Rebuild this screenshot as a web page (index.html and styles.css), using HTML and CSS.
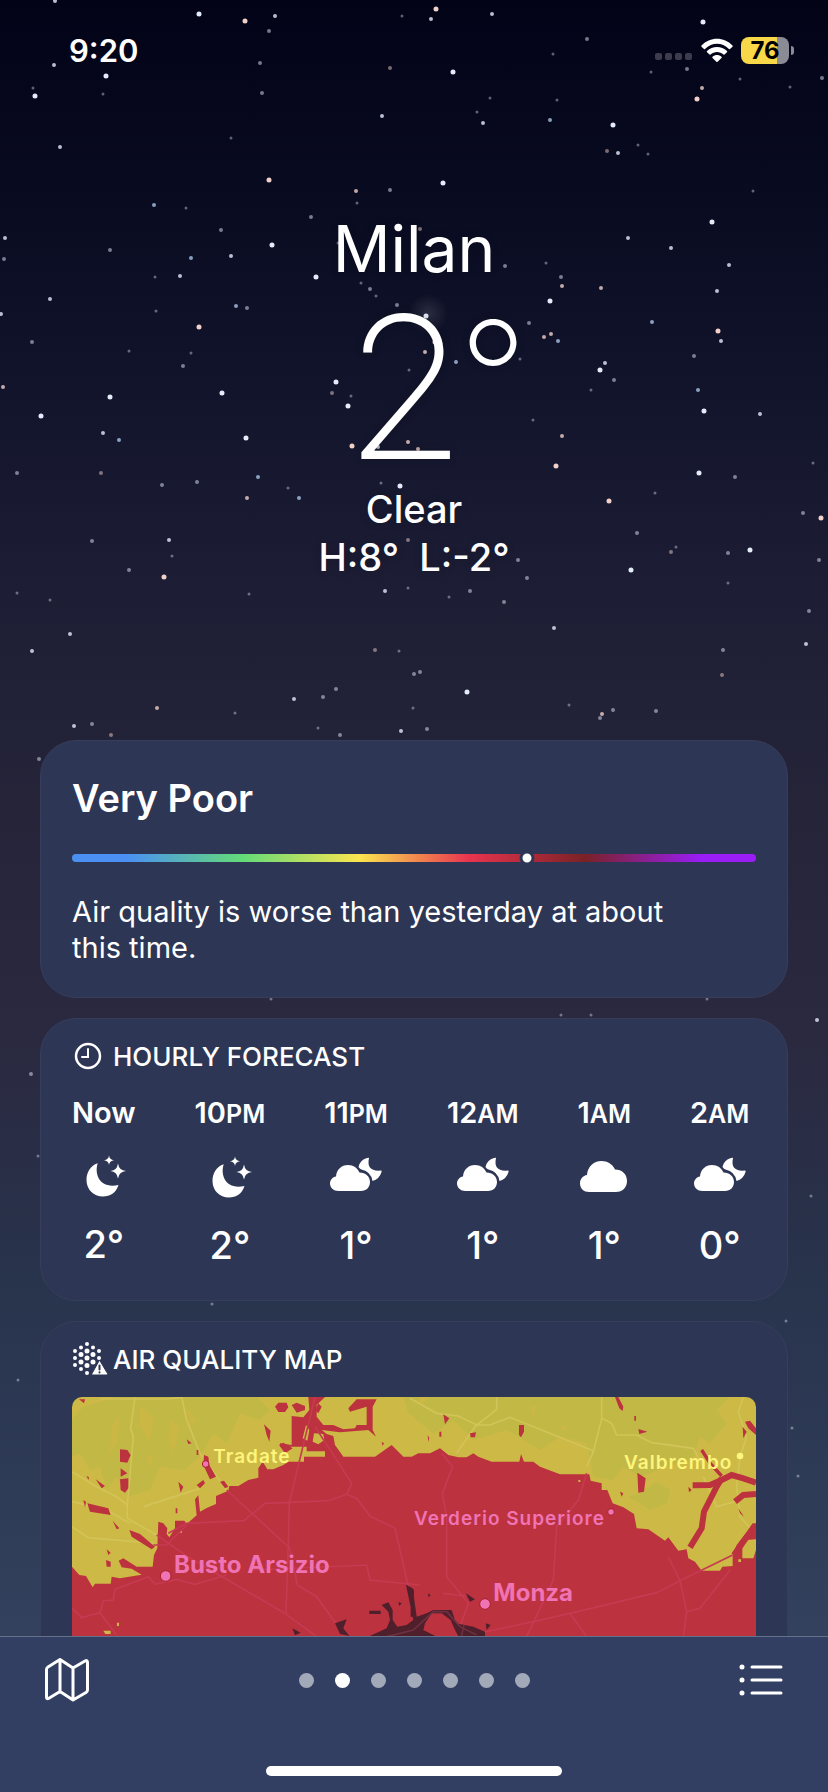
FILE: index.html
```html
<!DOCTYPE html>
<html lang="en">
<head>
  <meta charset="UTF-8">
  <meta name="viewport" content="width=device-width, initial-scale=1.0">
  <title>Weather - Milan</title>
  <link rel="stylesheet" href="styles.css">
</head>
<body>
  <!-- shared icons -->
  <svg class="defs" width="0" height="0" aria-hidden="true">
    <symbol id="moon-stars" viewBox="0 0 44 44">
      <path d="M15.500 10C12.500 20 17.500 35 36.500 31C34 39 28 42.500 21 42.500C11.500 42.500 4.500 35.500 4.500 26C4.500 18 8.500 12 15 9.500Q16.500 9.200 15.500 10Z"/>
      <path d="M27 1.500Q27.500 5.800 32 6.300Q27.500 6.800 27 11Q26.500 6.800 22 6.300Q26.500 5.800 27 1.500Z"/>
      <path d="M36 9.500Q37 16.500 44 17Q37 17.500 36 24.500Q35 17.500 28.500 17Q35 16.500 36 9.500Z"/>
    </symbol>
    <symbol id="cloud-moon" viewBox="0 0 52 44">
      <path d="M8.500 36C3.500 36 0 32.500 0 28.500C0 25 2.500 22 6 21.500C6.500 14.500 11.500 10 18 10C23.500 10 27.500 13 29.500 17.500C35.500 17.500 40 21.500 40 27C40 32 36.500 36 31 36Z"/>
      <path d="M39 3Q36 17 51 15.500Q52 15.400 51.500 17Q49.500 24 42.500 26Q41 16.500 31.500 14.500Q30 14 28.500 12Q30 5 37 3Q39 2.500 39 3Z"/>
    </symbol>
    <symbol id="cloud" viewBox="0 0 48 44">
      <path d="M9 37C4 37 0 33.500 0 28.500C0 24 3 20.500 7 20C7.500 12 13.500 6 21.500 6C27.500 6 32.500 9 35 14.500C42 14.500 47 19 47 26C47 32.500 42.500 37 36 37Z"/>
    </symbol>
  </svg>

  <div class="screen">
    <svg class="stars" width="828" height="1636" aria-hidden="true">
      <defs>
        <radialGradient id="halo">
          <stop offset="0" stop-color="#fff" stop-opacity=".12"/>
          <stop offset="1" stop-color="#fff" stop-opacity="0"/>
        </radialGradient>
      </defs>
      <circle cx="428" cy="314" r="20" fill="url(#halo)"/>
      <path class="star big" d="M199 14h0M453 72h0M106 76h0M35 96h0M613 125h0M443 183h0M272 245h0M316 277h0M426 316h0M600 370h0M222 393h0M336 382h0M348 406h0M41 416h0M704 411h0M703 22h0M712 222h0M550 301h0M699 473h0M400 486h0M750 550h0M631 570h0M467 692h0M246 438h0M110 397h0"/>
      <path class="star big warm" d="M436 9h0M245 21h0M269 180h0M199 327h0M718 331h0M556 466h0M609 501h0M164 577h0M352 446h0M697 99h0M435 342h0M821 518h0"/>
      <path class="star mid" d="M492 14h0M54 65h0M483 123h0M382 116h0M60 147h0M618 153h0M5 238h0M231 256h0M180 276h0M628 238h0M671 248h0M729 265h0M717 291h0M50 299h0M1 314h0M721 341h0M605 363h0M760 414h0M103 433h0M378 447h0M169 540h0M385 591h0M554 628h0M70 634h0M32 651h0M806 644h0M294 699h0M74 726h0M401 731h0M55 1h0M275 16h0M431 19h0M817 1020h0"/>
      <path class="star mid warm" d="M356 191h0M562 286h0M601 288h0M544 337h0M551 334h0M3 387h0M562 436h0M247 498h0M157 708h0M602 714h0M408 442h0M702 88h0M418 449h0M425 352h0"/>
      <path class="star mid cool" d="M550 120h0M154 205h0M191 258h0M236 306h0M652 322h0M456 362h0M119 440h0M299 498h0M258 477h0M698 390h0M558 341h0"/>
      <path class="star small" d="M269 31h0M587 39h0M260 63h0M687 69h0M822 78h0M262 93h0M390 190h0M311 217h0M221 230h0M110 250h0M4 259h0M505 266h0M561 277h0M370 289h0M397 305h0M247 308h0M529 323h0M32 342h0M183 366h0M694 356h0M614 380h0M735 477h0M17 473h0M162 485h0M197 482h0M803 513h0M92 541h0M129 570h0M637 533h0M728 553h0M819 560h0M518 560h0M527 578h0M470 591h0M504 602h0M809 611h0M723 650h0M414 674h0M420 672h0M336 689h0M323 697h0M613 710h0M600 718h0M656 711h0M92 724h0M340 735h0M427 729h0M39 759h0M31 1074h0"/>
      <path class="star small warm" d="M390 68h0M607 151h0M420 229h0M332 393h0M101 473h0M408 540h0M671 552h0M375 650h0M722 675h0M111 735h0"/>
      <path class="star dim" d="M402 16h0M553 54h0M33 88h0M103 94h0M651 72h0M740 79h0M790 87h0M490 98h0M557 100h0M477 112h0M231 138h0M638 145h0M648 154h0M357 203h0M186 208h0M753 191h0M155 277h0M338 243h0M546 263h0M361 283h0M376 296h0M156 311h0M129 351h0M191 353h0M409 370h0M520 359h0M591 390h0M351 396h0M533 420h0M813 463h0M288 488h0M381 483h0M655 493h0M172 556h0M676 547h0M728 583h0M408 588h0M449 597h0M17 593h0M50 600h0M249 594h0M399 651h0M235 713h0M413 708h0M569 705h0M318 728h0M561 1015h0M591 1015h0M271 999h0M707 999h0M38 1156h0M811 1196h0M212 1304h0M786 1321h0M792 1428h0M798 1476h0M18 1380h0"/>
    </svg>

    <header class="status-bar">
      <span class="time">9:20</span>
      <div class="status-icons">
        <svg class="signal" width="38" height="8" viewBox="0 0 38 8" aria-hidden="true">
          <rect width="7" height="7" rx="2"/><rect x="10" width="7" height="7" rx="2"/><rect x="20" width="7" height="7" rx="2"/><rect x="30" width="7" height="7" rx="2"/>
        </svg>
        <svg class="wifi" width="32" height="25" viewBox="0 0 32 25" aria-label="Wi-Fi">
          <path d="M0.500 7.500C9 -1.500 23 -1.500 31.500 7.500Q32 8.100 31.500 8.700L29 11Q28.500 11.500 28 11C21 4 11 4 4 11Q3.500 11.500 3 11L.5 8.700Q0 8.100 .5 7.500Z"/>
          <path d="M6 13C11.500 7.500 20.500 7.500 26 13Q26.500 13.600 26 14.200L23.500 16.600Q23 17 22.500 16.600C19 13 13 13 9.500 16.600Q9 17 8.500 16.600L6 14.200Q5.500 13.600 6 13Z"/>
          <path d="M11.500 18.700C14 16.400 18 16.400 20.500 18.700Q21 19.300 20.500 19.900L16.600 23.800Q16 24.400 15.400 23.800L11.500 19.900Q11 19.300 11.500 18.700Z"/>
        </svg>
        <div class="battery"><span>76</span></div>
      </div>
    </header>

    <main class="content">
      <section class="current">
        <h1>Milan</h1>
        <p class="temperature">2<span class="unit">°</span></p>
        <p class="summary">Clear</p>
        <p class="summary">H:8°&nbsp; L:-2°</p>
      </section>

      <section class="card air-quality">
        <h2>Very Poor</h2>
        <div class="scale"><span class="marker" style="left: 66.5%"></span></div>
        <p>Air quality is worse than yesterday at about<br>this time.</p>
      </section>

      <section class="card">
        <h3 class="card-title">
          <svg width="36" height="30" viewBox="0 0 36 30" aria-hidden="true">
            <g fill="none" stroke="#fff" stroke-linecap="round">
              <circle cx="16" cy="15" r="12" stroke-width="2.500"/>
              <path d="M16 8v8h-6" stroke-width="2"/>
            </g>
          </svg>
          HOURLY FORECAST
        </h3>
        <ul class="hours">
          <li><span class="hour">Now</span><svg width="44" height="44"><use href="#moon-stars"/></svg><span class="degrees">2°</span></li>
          <li><span class="hour">10<small>PM</small></span><svg width="44" height="44"><use href="#moon-stars"/></svg><span class="degrees">2°</span></li>
          <li><span class="hour">11<small>PM</small></span><svg width="52" height="44"><use href="#cloud-moon"/></svg><span class="degrees">1°</span></li>
          <li><span class="hour">12<small>AM</small></span><svg width="52" height="44"><use href="#cloud-moon"/></svg><span class="degrees">1°</span></li>
          <li><span class="hour">1<small>AM</small></span><svg width="48" height="44"><use href="#cloud"/></svg><span class="degrees">1°</span></li>
          <li><span class="hour">2<small>AM</small></span><svg width="52" height="44"><use href="#cloud-moon"/></svg><span class="degrees">0°</span></li>
        </ul>
      </section>

      <section class="card">
        <h3 class="card-title">
          <svg width="36" height="34" viewBox="0 0 36 34" aria-hidden="true">
            <g fill="none" stroke="#fff" stroke-linecap="round">
              <path stroke-width="4" d="M15 2h0M9 5.500h0M21 5.500h0M3 9h0M27 9h0M3 16h0M3 23h0M9 27h0M15 31h0M27 16h0"/>
              <path stroke-width="5" d="M15 9h0M9 12.500h0M21 12.500h0M15 16h0M9 20h0M21 20h0M15 23.500h0"/>
            </g>
            <path class="warning" d="M27.500 18L35.500 31.500Q35.500 33 34.500 33H20.500Q19.500 33 20 31.500Z"/>
            <path stroke="#2e3655" stroke-width="2" stroke-linecap="round" d="M27.500 23.500v4M27.500 30.300v.2"/>
          </svg>
          AIR QUALITY MAP
        </h3>
        <svg class="map" viewBox="96 261 2052 1200" preserveAspectRatio="xMidYMin slice" role="img" aria-label="Air quality map">
          <rect class="moderate" x="96" y="261" width="2052" height="1200"/>
          <!-- better air inside the yellow area -->
          <path class="light" d="M96 330L130 290L230 261H650L690 300L660 330L600 310L560 400L520 370L480 440L430 480L360 470L330 540L262 560L230 500L200 540L180 470L150 480L120 430L96 440ZM1110 300L1170 261H2070L2030 300L2060 340L2010 400L1980 380L1960 440L1800 500L1750 470L1720 510L1660 500L1640 400L1560 380L1500 420L1400 360L1300 390L1240 330L1180 370L1130 330Z"/>
          <path class="light" d="M1765 560L1800 550L1850 515L1890 540L1880 580L1830 600L1800 580ZM1090 261H1140V330L1105 310Z"/>
          <g class="patch">
            <path d="M240 310L230 400L205 440L215 350ZM300 290L340 320L330 400L300 350ZM390 330L420 350L400 430L385 390ZM440 290L470 330L450 350ZM1470 290L1490 285L1480 330ZM1560 350L1585 345L1575 365ZM320 430L340 440L330 480Z"/>
          </g>
          <path class="road-yellow" d="M96 485L170 530L230 560L262 585M285 261L272 355L280 380L262 585V625L350 675M425 261L440 330L480 430L560 540M96 650L145 683L340 700M96 575L200 600L270 640M180 267H380L430 262M310 590L480 535M1110 265L1190 310L1255 318L1310 345L1350 345L1410 322L1660 422M1370 261V298L1305 350L1250 430M1685 261V325L1660 425L1640 470M1685 325L1715 340L1730 375H1790L1835 398L1960 415L1990 470M2110 261L2095 305L2120 380L2100 440L2090 530L2100 620L2140 665M1990 500L2030 590L2085 575"/>
          <path class="poor" d="M96 770L118 795L138 798L158 832L165 821H212L215 800L240 805L305 794L275 776L245 772L236 752L250 745L290 770H338L342 735L352 715L355 635L370 640L382 655L380 672L388 682L405 655V632H433L440 642L470 616L465 568L475 556L480 605L500 594L528 582V558L565 542L568 528L595 528L625 510L655 503V475L668 455L682 478L700 478L730 465L745 455H792V440H855V424H800V410H720V400L755 405V318L790 322L808 300L805 261H855L830 285V320L850 345H880L910 358L945 355L950 345H980V290L930 305L925 295L950 268H1010L998 290V360L1008 380L985 360L900 367L845 360L860 372L880 378L885 405L910 440H1005L1055 405L1090 440H1115L1135 430H1170L1200 415L1225 435L1255 442H1280L1300 430L1315 440L1355 455H1438L1443 432L1452 455H1480L1500 470L1560 493H1648L1652 512L1685 520V540H1702L1718 580L1750 592L1782 612L1790 655L1825 658L1875 692L1885 682L1915 722L1940 718L1945 745L1965 755L1985 782H2040L2047 770L2078 768V735L2090 705L2125 660L2138 640H2148V688L2120 690L2107 712V745H2140L2148 720V1461H96Z"/>
          <path class="moderate" d="M798 345L808 360L802 392L788 385ZM822 370L850 372L853 390L835 403L818 395Z"/>
          <path class="poor" d="M705 290L715 278H740L745 292L735 306H715ZM755 285L770 278L795 288V300L770 308ZM835 280L845 290L835 310L825 300ZM240 418L262 420L272 435L262 458L240 455ZM242 475L262 490L242 500ZM240 508L265 505V535L255 548L242 540ZM142 580L205 595L212 615L150 605ZM130 570L138 575L135 592ZM167 508L195 528L185 535ZM140 498L147 502L145 510ZM415 515L430 530L422 548ZM470 525L490 510L495 520L480 535ZM492 435L505 440L508 465L528 500L510 508L490 465ZM540 515L552 512L565 530L555 535ZM672 343L692 362L688 395L680 375ZM717 405L730 398L758 415L735 430ZM218 632L238 655L230 658ZM268 660L300 672L345 710L335 718L275 680ZM200 718L212 728L205 735ZM198 750L212 755V770H200ZM440 388L455 400L445 402ZM117 268H135L132 280ZM1025 395L1032 400L1028 408ZM470 420h5v15h-5zM407 595h5v15h-5z"/>
          <path class="poor" d="M1210 313L1228 325L1215 343ZM1290 370L1308 367L1305 382H1292ZM1437 345H1452V365L1443 382L1437 375ZM1725 261H1735L1750 290L1748 303L1738 295ZM1783 318h5v14h-5zM1795 357L1822 365L1798 372ZM1792 488L1817 505L1812 545L1795 548ZM1740 545L1750 550L1745 560ZM2115 335L2130 332L2148 355V375L2125 355ZM2108 350L2120 365L2110 385ZM1163 375L1168 385L1165 395ZM1198 365h6v15h-6zM1945 530L1955 540L1947 547ZM2095 595L2112 620L2100 610Z"/>
          <path class="river" d="M1950 712L1985 655L1992 605L2030 530L2045 505" />
          <path class="river thin" d="M1985 420L2012 462L2045 498"/>
          <path class="river" d="M1958 526L2010 525L2045 510L2075 495L2110 505L2148 518M2085 575L2110 555L2148 552M2082 735L2110 695L2142 650"/>
          <path class="moderate" d="M190 962H212V972H196ZM231 938h6v10h-6zM1615 510h6v6h-6zM2095 748h8v8h-8zM420 662h6v6h-6z"/>
          <path class="road-red" d="M350 675L440 738L735 910L830 980M385 670L440 640L612 632L675 580L748 577L865 572L920 553L950 565L990 618L1065 655L1105 830M748 577L745 700L738 910M825 261L748 577M825 350L935 520L920 553M560 540L750 715L772 825L830 860L880 930L920 980M340 705H380L440 645M96 895L125 923L180 908L230 975M180 908L190 873L220 870L225 838L325 800L345 823L410 808L465 823L560 795M640 780L980 765L990 810L1140 825"/>
          <path class="road-red" d="M1205 430L1238 470L1207 550L1220 620V800L1285 880L1250 980M1640 490L1615 570L1550 650L1540 810L1460 980M1290 975L1480 935L1590 910L1850 848L1920 812L2078 735M1590 910L1640 980M1210 850L1280 858M1885 740L1920 812L1940 905L1980 895L2070 780M1940 905L1930 980"/>
          <path class="severe" d="M988 902H1022V912H988ZM1025 885L1045 877L1058 900V930L1072 950L1100 945L1120 930L1098 825L1118 835L1130 920L1160 910L1180 900H1235L1248 940L1300 950L1335 965V980H1255L1245 960L1232 930L1205 910H1175L1155 940L1150 960L1190 980H985L1040 955L1050 930L1045 905ZM885 940L920 928L910 955L928 978L900 972ZM757 955L782 968L765 976ZM1075 876L1085 880L1078 888ZM1100 825L1122 840V920H1112V850ZM1277 850L1305 868L1290 875ZM1337 940L1352 945L1340 960ZM1164 850L1172 856L1166 862Z"/>
          <path class="road-dark" d="M1040 980L1120 960L1180 905H1220L1260 950L1310 975M1264 980L1272 945"/>
          <g class="place yellow">
            <circle cx="2100" cy="438" r="10"/>
            <text x="520" y="460">Tradate</text>
            <text x="1752" y="476">Valbrembo</text>
          </g>
          <g class="place">
            <circle cx="497" cy="462" r="10"/>
            <circle cx="1713" cy="606" r="10"/>
            <text x="1122" y="644">Verderio Superiore</text>
          </g>
          <g class="place city">
            <circle cx="377" cy="798" r="16"/>
            <circle cx="1335" cy="882" r="16"/>
            <text x="402" y="790">Busto Arsizio</text>
            <text x="1360" y="873">Monza</text>
          </g>
        </svg>
      </section>
    </main>

    <footer class="toolbar">
      <div class="toolbar-row">
        <button type="button" aria-label="Map">
          <svg width="44" height="44" viewBox="0 0 44 44" aria-hidden="true">
            <path d="M1.500 11.500Q1.500 10 3 9L15 1.500L28 10L40 3Q42.500 1.700 42.500 4.500V32Q42.500 33.500 41 34.500L28 42L15 33.500L3.500 40.500Q1.500 41.500 1.500 39ZM15 2V33.500M28 10V42"/>
          </svg>
        </button>
        <div class="pages">
          <span></span><span class="active"></span><span></span><span></span><span></span><span></span><span></span>
        </div>
        <button type="button" aria-label="Locations">
          <svg width="44" height="44" viewBox="0 0 44 44" aria-hidden="true">
            <path d="M13 9H42M13 22H42M13 35H42"/>
            <path class="bullets" d="M3 9h0M3 22h0M3 35h0"/>
          </svg>
        </button>
      </div>
      <div class="home-indicator"></div>
    </footer>
  </div>
</body>
</html>
```

FILE: styles.css
```css
* {
  box-sizing: border-box;
}
body {
  margin: 0;
  font-family: Inter, Roboto, "Liberation Sans", sans-serif;
  color: #fff;
  background: #020317;
}
h1, h2, h3, p, ul {
  margin: 0;
  padding: 0;
}
.defs {
  position: absolute;
}
.screen {
  position: relative;
  display: flex;
  flex-direction: column;
  height: 100vh;
  overflow: hidden;
  background: linear-gradient(#020317 0%, #080a20 10%, #14162e 24%, #1d1e35 33%, #252439 45%, #2a2940 58%, #28334c 71%, #33415e 91%);
}

/* night sky */
.stars {
  position: absolute;
  top: 0;
  left: 0;
}
.star {
  fill: none;
  stroke: #e4ecfa;
  stroke-linecap: round;
}
.star.big {
  stroke-width: 5;
}
.star.mid {
  stroke-width: 4;
  opacity: 0.8;
}
.star.small {
  stroke-width: 4;
  opacity: 0.5;
}
.star.dim {
  stroke-width: 3;
  opacity: 0.4;
}
.star.warm {
  stroke: #f0d0c8;
}
.star.cool {
  stroke: #a9c4e4;
}

.status-bar {
  position: relative;
  display: flex;
  justify-content: space-between;
  align-items: center;
  height: 100px;
  padding: 0 34px 0 69px;
}
.time {
  font-size: 31px;
  font-weight: 600;
}
.status-icons {
  display: flex;
  align-items: center;
  gap: 8px;
}
.signal {
  fill: #3d3c4c;
  margin-top: 14px;
}
.wifi {
  fill: #fff;
}
.battery {
  position: relative;
  width: 48px;
  height: 27px;
  margin-right: 5px;
  border-radius: 8px;
  background: linear-gradient(90deg, #f8d749 75%, #8b8b95 75%);
  color: #000;
  font-size: 24px;
  font-weight: 700;
  line-height: 27px;
  text-align: center;
}
.battery::after {
  content: "";
  position: absolute;
  top: 9px;
  right: -5px;
  width: 3px;
  height: 9px;
  border-radius: 0 3px 3px 0;
  background: #8b8b95;
}

.content {
  position: relative;
  flex: 1;
  min-height: 0;
  overflow: hidden;
  padding: 0 40px;
}
.current {
  padding: 109px 0 159px;
  text-align: center;
  text-shadow: 0 0 8px rgba(0, 0, 0, 0.2);
}
.current h1 {
  font-size: 64px;
  font-weight: 400;
  line-height: 80px;
}
.temperature {
  padding-left: 44px;
  font-size: 198px;
  font-weight: 200;
  line-height: 196px;
}
.unit {
  margin-left: -8px;
  font-size: 152px;
  line-height: 0;
  vertical-align: 28px;
}
.summary {
  font-size: 38px;
  font-weight: 500;
  line-height: 48px;
}

.card {
  margin-bottom: 20px;
  padding: 20px 31px 31px;
  border: 1px solid #363e5b;
  border-radius: 36px;
  background: #2e3655;
}
.card-title {
  display: flex;
  align-items: center;
  gap: 5px;
  height: 34px;
  font-size: 26px;
  font-weight: 500;
}
.warning {
  fill: #fff;
  stroke: #2e3655;
  stroke-width: 1;
}

.air-quality {
  padding-top: 32px;
}
.air-quality h2 {
  font-size: 38px;
  font-weight: 600;
  line-height: 50px;
}
.air-quality p {
  font-size: 29px;
  line-height: 36px;
}
.scale {
  position: relative;
  height: 8px;
  margin: 31px 0 32px;
  border-radius: 4px;
  background: linear-gradient(90deg, #4a90f2 8%, #64db78 25%, #fbe54e 42%, #e8344f 58%, #7a2126 75%, #9a1df5 92%);
}
.marker {
  position: absolute;
  top: 50%;
  width: 15px;
  height: 15px;
  border: 3px solid #2e3655;
  border-radius: 50%;
  background: #fff;
  transform: translate(-50%, -50%);
}

.hours {
  display: flex;
  gap: 59px;
  margin-top: 22px;
  list-style: none;
}
.hours li {
  display: flex;
  flex-direction: column;
  align-items: center;
}
.hours svg {
  margin: 23px 0 22px;
  fill: #fff;
}
.hour {
  font-size: 29px;
  font-weight: 600;
  line-height: 36px;
}
.hour small {
  font-size: 25px;
}
.degrees {
  font-size: 38px;
  font-weight: 500;
  line-height: 48px;
}

/* air quality map */
.map {
  display: block;
  width: 100%;
  height: 400px;
  margin-top: 21px;
  border-radius: 10px;
}
.moderate {
  fill: #cdb945;
}
.light {
  fill: #c2b846;
}
.patch {
  fill: #cab744;
}
.poor {
  fill: #bc323f;
}
.severe {
  fill: #4f1f2b;
}
.river {
  fill: none;
  stroke: #bc323f;
  stroke-width: 18;
}
.river.thin {
  stroke-width: 10;
}
.road-yellow, .road-red, .road-dark {
  fill: none;
  stroke-width: 5;
}
.road-yellow {
  stroke: #d2c458;
}
.road-red {
  stroke: #c63a52;
}
.road-dark {
  stroke: #6d3040;
}
.place {
  font-size: 57px;
  font-weight: 600;
  letter-spacing: 3px;
  fill: #f073b4;
}
.place.yellow {
  fill: #fdf57c;
}
.place.city {
  font-size: 72px;
  font-weight: 700;
  letter-spacing: 0;
}
.place circle {
  stroke: #a9212f;
  stroke-width: 3;
}
.place.yellow circle {
  stroke: none;
}

.toolbar {
  position: relative;
  display: flex;
  flex-direction: column;
  justify-content: space-between;
  height: 156px;
  padding: 21px 45px 16px;
  border-top: 1px solid #66718c;
  background: #323f62;
}
.toolbar-row {
  display: flex;
  justify-content: space-between;
  align-items: center;
}
.toolbar button {
  padding: 0;
  border: none;
  background: none;
  cursor: pointer;
}
.toolbar svg {
  display: block;
  fill: none;
  stroke: #fff;
  stroke-width: 3;
  stroke-linecap: round;
  stroke-linejoin: round;
}
.toolbar .bullets {
  stroke-width: 5;
}
.pages {
  display: flex;
  gap: 21px;
}
.pages span {
  width: 15px;
  height: 15px;
  border-radius: 50%;
  background: #a2a9b9;
}
.pages .active {
  background: #fff;
}
.home-indicator {
  width: 296px;
  height: 10px;
  margin: 0 auto;
  border-radius: 5px;
  background: #fff;
}
```
